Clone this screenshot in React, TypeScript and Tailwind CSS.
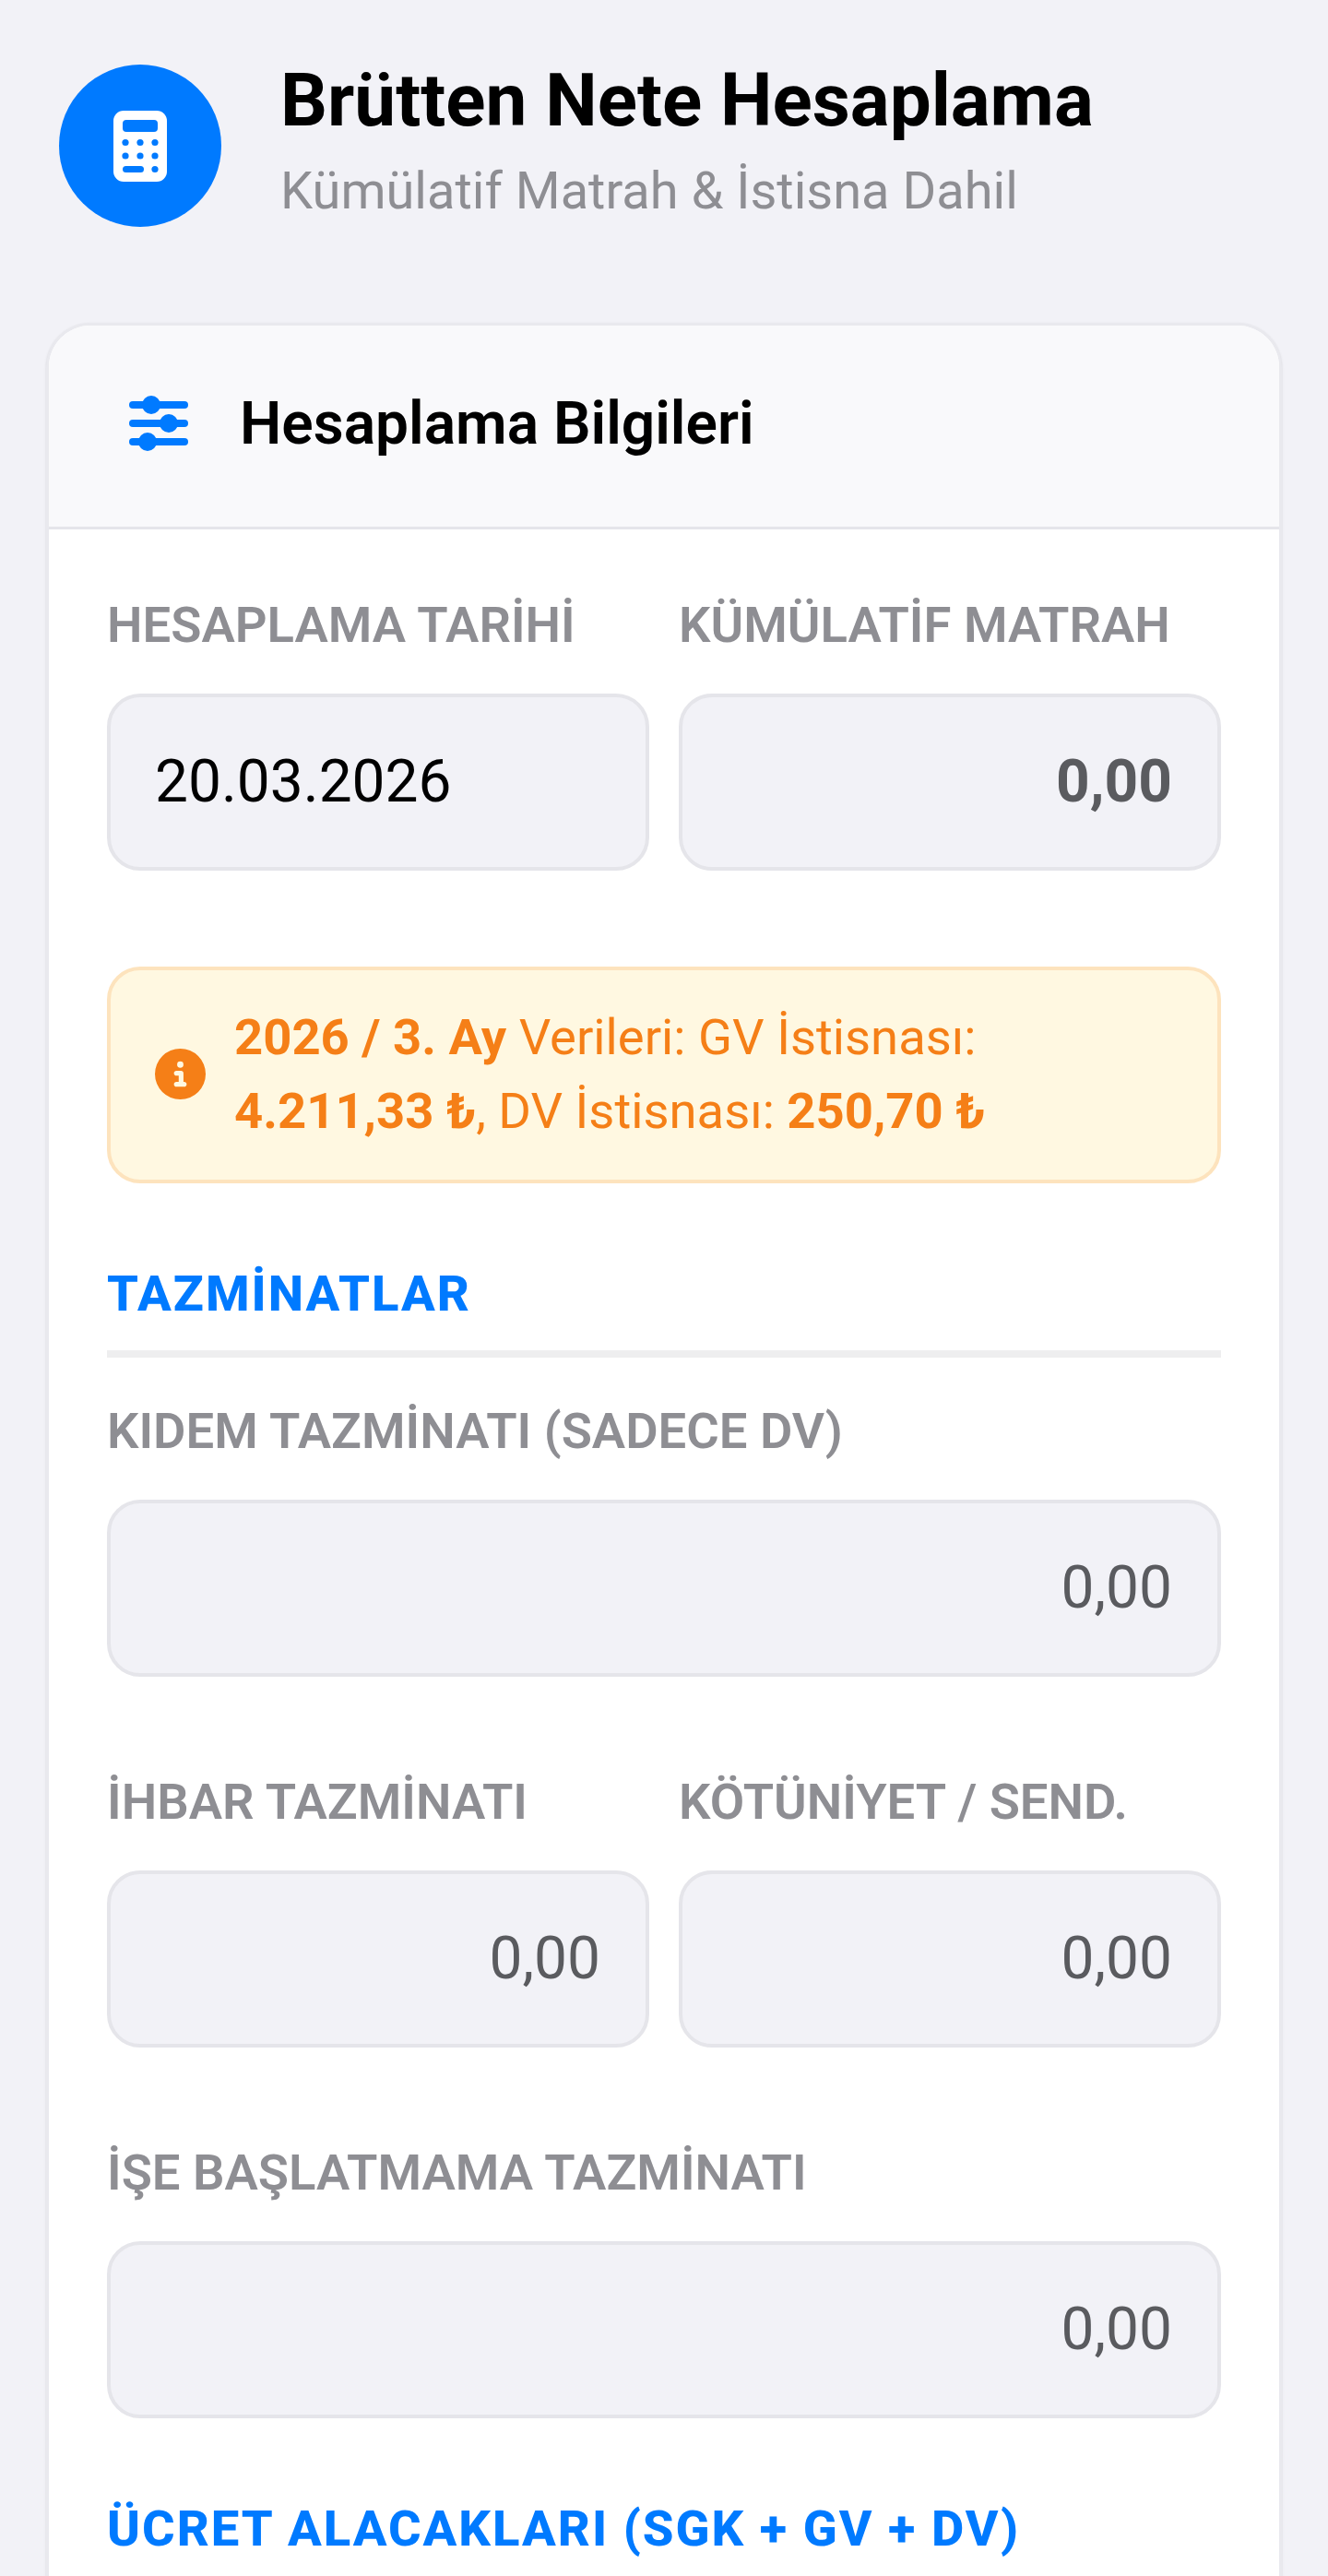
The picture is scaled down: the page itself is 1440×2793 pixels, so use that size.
import { FaCircleInfo } from 'react-icons/fa6'

function CalculatorIcon() {
  return (
    <svg width="58" height="77" viewBox="0 0 58 77">
      <rect width="58" height="77" rx="11" fill="#fff" />
      <rect x="10" y="10" width="38" height="13" rx="4" fill="#007aff" />
      <circle cx="13" cy="34.500" r="3.600" fill="#007aff" />
      <circle cx="29" cy="34.500" r="3.600" fill="#007aff" />
      <circle cx="45" cy="34.500" r="3.600" fill="#007aff" />
      <circle cx="13" cy="49" r="3.600" fill="#007aff" />
      <circle cx="29" cy="49" r="3.600" fill="#007aff" />
      <circle cx="45" cy="49" r="3.600" fill="#007aff" />
      <rect x="10" y="60" width="23" height="7" rx="3.500" fill="#007aff" />
      <circle cx="45" cy="63.500" r="3.600" fill="#007aff" />
    </svg>
  )
}

function SlidersIcon() {
  return (
    <svg width="64" height="60" viewBox="0 0 64 60">
      <g fill="#007aff">
        <rect y="6" width="64" height="8" rx="4" />
        <rect y="26" width="64" height="8" rx="4" />
        <rect y="46" width="64" height="8" rx="4" />
        <circle cx="24" cy="10" r="10" />
        <circle cx="43" cy="30" r="10" />
        <circle cx="20" cy="50" r="10" />
      </g>
    </svg>
  )
}

function Label({ children }: { children: React.ReactNode }) {
  return <div className="text-[54.400px] leading-[64px] font-semibold text-[#8e8e93] whitespace-nowrap">{children}</div>
}

function Field({ label, value }: { label: string; value: string }) {
  return (
    <div className="flex-1 min-w-0">
      <Label>{label}</Label>
      <div className="mt-[42px] h-[192px] rounded-[36px] border-[4px] border-[#e5e5ea] bg-[#f2f2f7] flex items-center justify-end px-[49px] text-[64px] text-[#5a5b5f]">
        {value}
      </div>
    </div>
  )
}

export default function App() {
  return (
    <div className="h-[2793px] overflow-hidden bg-[#f2f2f7] font-['Roboto',sans-serif] text-black">
      {/* Header */}
      <header className="flex items-center pt-[63px] pl-[64px]">
        <div className="w-[176px] h-[176px] rounded-full bg-[#007aff] flex items-center justify-center">
          <CalculatorIcon />
        </div>
        <div className="ml-[64px] pb-[11px]">
          <h1 className="text-[80px] leading-[92px] font-bold">Brütten Nete Hesaplama</h1>
          <p className="mt-[17px] text-[56px] leading-[70px] text-[#8e8e93]">Kümülatif Matrah &amp; İstisna Dahil</p>
        </div>
      </header>

      {/* Card */}
      <section className="mx-[50px] mt-[97px] rounded-t-[48px] border-[3px] border-b-0 border-[#e9e9ee] bg-white shadow-sm overflow-hidden">
        <div className="h-[221px] flex items-center pl-[87px] pb-[6px] bg-[#f9f9fb] border-b-[3px] border-[#e5e5ea]">
          <SlidersIcon />
          <span className="ml-[56px] mt-[2px] text-[64px] font-semibold">Hesaplama Bilgileri</span>
        </div>

        <div className="px-[63px] pt-[72px] pb-[200px]">
          <div className="flex gap-[32px]">
            <div className="flex-1 min-w-0">
              <Label>HESAPLAMA TARİHİ</Label>
              <div className="mt-[42px] h-[192px] rounded-[36px] border-[4px] border-[#e5e5ea] bg-[#f2f2f7] flex items-center px-[48px] text-[64px] text-black">
                20.03.2026
              </div>
            </div>
            <div className="flex-1 min-w-0">
              <Label>KÜMÜLATİF MATRAH</Label>
              <div className="mt-[42px] h-[192px] rounded-[36px] border-[4px] border-[#e5e5ea] bg-[#f2f2f7] flex items-center justify-end px-[49px] text-[64px] font-bold text-[#5a5b5f]">
                0,00
              </div>
            </div>
          </div>

          <div className="mt-[104px] h-[235px] rounded-[36px] border-[4px] border-[#fde3bd] bg-[#fff8e1] flex items-center pl-[48px] pb-[2px] text-[#f57f17]">
            <FaCircleInfo className="w-[55px] h-[55px] shrink-0" />
            <p className="ml-[31px] text-[54.400px] leading-[80px]">
              <b className="font-bold">2026 / 3. Ay</b> Verileri: GV İstisnası:
              <br />
              <b className="font-bold">4.211,33 ₺</b>, DV İstisnası: <b className="font-bold">250,70 ₺</b>
            </p>
          </div>

          <div className="mt-[90px] text-[54.400px] leading-[60px] tracking-[2px] font-extrabold text-[#007aff]">TAZMİNATLAR</div>
          <div className="mt-[31px] h-[8px] bg-[#eeeeef]" />

          <div className="mt-[48px]">
            <Field label="KIDEM TAZMİNATI (SADECE DV)" value="0,00" />
          </div>
          <div className="mt-[104px] flex gap-[32px]">
            <Field label="İHBAR TAZMİNATI" value="0,00" />
            <Field label="KÖTÜNİYET / SEND." value="0,00" />
          </div>
          <div className="mt-[104px]">
            <Field label="İŞE BAŞLATMAMA TAZMİNATI" value="0,00" />
          </div>

          <div className="mt-[90px] text-[54.400px] leading-[60px] tracking-[2px] font-extrabold text-[#007aff]">ÜCRET ALACAKLARI (SGK + GV + DV)</div>
        </div>
      </section>
    </div>
  )
}
